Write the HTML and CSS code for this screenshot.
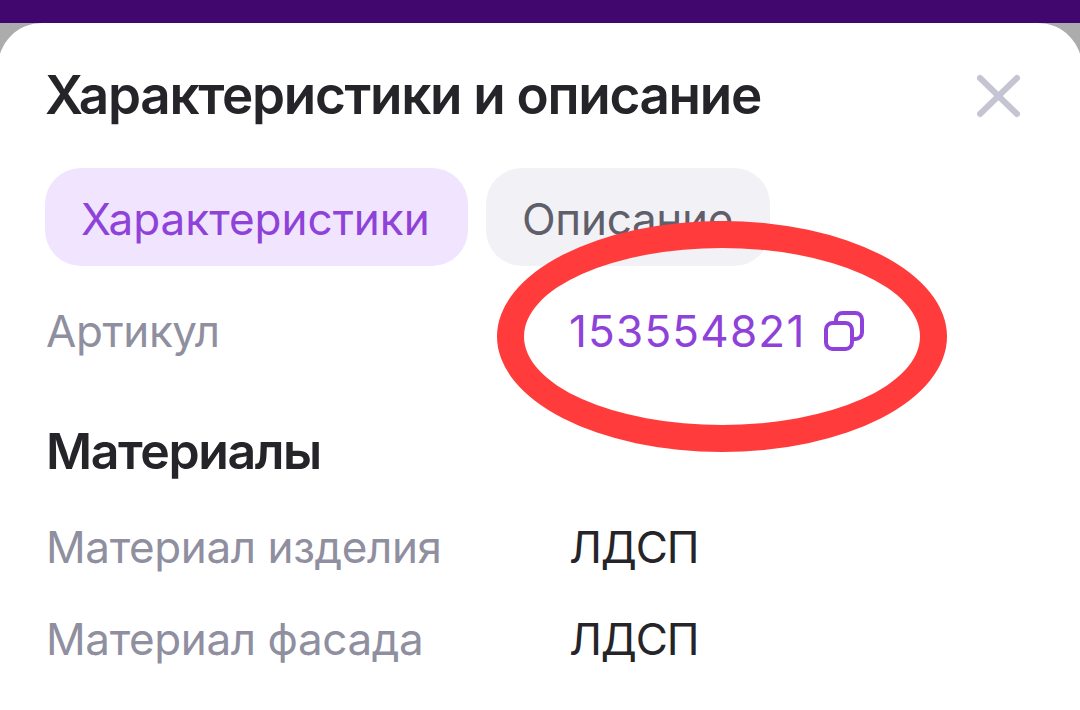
FILE: index.html
```
<!DOCTYPE html>
<html lang="ru">
<head>
    <meta charset="UTF-8">
    <meta name="viewport" content="width=device-width, initial-scale=1.0">
    <title>Характеристики и описание</title>
    <link rel="stylesheet" href="styles.css">
</head>
<body>
    <div class="status-bar"></div>

    <div class="sheet">
        <div class="sheet-header">
            <h1>Характеристики и описание</h1>
            <button class="close-btn" aria-label="Закрыть">
                <svg width="44" height="44" viewBox="0 0 44 44">
                    <path d="M3 4L40 40M40 4L3 40"/>
                </svg>
            </button>
        </div>

        <div class="tabs">
            <button class="tab active">Характеристики</button>
            <button class="tab">Описание</button>
        </div>

        <div class="row article">
            <span class="label">Артикул</span>
            <a class="value link">
                <span class="number">153554821</span>
                <svg class="copy-icon" width="40" height="40" viewBox="0 0 40 40">
                    <rect x="2" y="12" width="26" height="26" rx="6.500"/>
                    <path d="M12 12V8.500A6.500 6.500 0 0 1 18.500 2H31.500A6.500 6.500 0 0 1 38 8.500V21.500A6.500 6.500 0 0 1 31.500 28H28"/>
                </svg>
            </a>
            <!-- Выделение артикула -->
            <div class="highlight"></div>
        </div>

        <h2>Материалы</h2>
        <div class="row">
            <span class="label">Материал изделия</span>
            <span class="value caps">ЛДСП</span>
        </div>
        <div class="row">
            <span class="label">Материал фасада</span>
            <span class="value caps">ЛДСП</span>
        </div>
    </div>
</body>
</html>
```
FILE: styles.css
```
* {
    box-sizing: border-box;
}

body {
    margin: 0;
    height: 710px;
    overflow: hidden;
    background-color: #acacac;
    font-family: Inter, "Liberation Sans", sans-serif;
    color: #242429;
}

.status-bar {
    height: 23px;
    background-color: #42076e;
}

.sheet {
    height: 687px;
    margin: 0 -2px;
    padding: 34px 48px 0 47px;
    background-color: #fff;
    border-radius: 44px 44px 0 0;
}

.sheet-header {
    display: flex;
    justify-content: space-between;
    align-items: center;
    height: 74px;
    padding-right: 13px;
}

h1, h2 {
    margin: 0;
    font-weight: 600;
    white-space: nowrap;
}

h1 {
    padding-top: 1px;
    font-size: 53px;
    line-height: 74px;
    letter-spacing: -1.3px;
}

h2 {
    height: 70px;
    margin: 20px 0 15px 1px;
    font-size: 50px;
    line-height: 70px;
    letter-spacing: -1.4px;
}

button {
    padding: 0;
    border: none;
    background: none;
    font-family: inherit;
    cursor: pointer;
}

.close-btn {
    display: flex;
    margin-top: 4px;
}

.close-btn svg {
    fill: none;
    stroke: #c5c4d3;
    stroke-width: 6;
    stroke-linecap: round;
}

.tabs {
    display: flex;
    gap: 18px;
    margin-top: 37px;
}

.tab {
    width: 284px;
    height: 98px;
    padding: 3px 0 0 36px;
    border-radius: 36px;
    background-color: #f2f1f6;
    color: #5f5f6b;
    font-size: 44px;
    letter-spacing: -0.3px;
    text-align: left;
    white-space: nowrap;
}

.tab.active {
    width: 423px;
    background-color: #f1e4fe;
    color: #8f42d9;
    letter-spacing: 0;
}

.row {
    display: flex;
    align-items: center;
    height: 92px;
    font-size: 44px;
    white-space: nowrap;
}

.row.article {
    position: relative;
    height: 130px;
}

.label {
    width: 524px;
    padding-left: 1px;
    color: #8f8f9f;
    letter-spacing: -0.4px;
}

.caps {
    letter-spacing: -1.1px;
}

.link {
    display: flex;
    align-items: center;
    gap: 18px;
    color: #8f42d9;
}

.number {
    letter-spacing: 1.2px;
}

.copy-icon {
    fill: none;
    stroke: #8f42d9;
    stroke-width: 4;
}

.highlight {
    position: absolute;
    left: 452px;
    top: -45px;
    width: 450px;
    height: 231px;
    border: 27px solid #ff3b3b;
    border-radius: 50%;
}
```
